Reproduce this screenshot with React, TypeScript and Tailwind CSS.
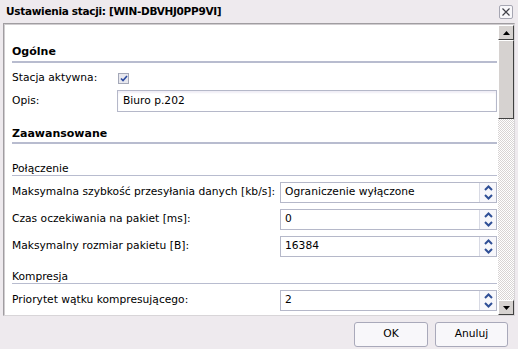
import React from "react";

const font = { fontFamily: '"DejaVu Sans", Verdana, sans-serif' };

function SpinInput({ value }: { value: string }) {
  return (
    <div className="flex h-[21px] w-[217px] border border-[#b5b8c9] bg-white">
      <div className="flex flex-1 items-center pl-[4px] text-[10.7px] text-black">{value}</div>
      <div className="flex w-[17px] flex-col border-l border-[#d8dae4] bg-[#f7f7fb]">
        <div className="flex flex-1 items-center justify-center">
          <svg width="9" height="6" viewBox="0 0 9 6">
            <path d="M1 5 L4.5 1.5 L8 5" fill="none" stroke="#2f4f96" strokeWidth="2" />
          </svg>
        </div>
        <div className="flex flex-1 items-center justify-center">
          <svg width="9" height="6" viewBox="0 0 9 6">
            <path d="M1 1 L4.5 4.5 L8 1" fill="none" stroke="#2f4f96" strokeWidth="2" />
          </svg>
        </div>
      </div>
    </div>
  );
}

function Row({ label, value, className = "" }: { label: string; value: string; className?: string }) {
  return (
    <div className={"flex h-[21px] items-center justify-between " + className}>
      <span className="text-[10.7px] text-black">{label}</span>
      <SpinInput value={value} />
    </div>
  );
}

function ScrollBtn({ up }: { up: boolean }) {
  return (
    <div className="flex h-[15px] w-[16px] items-center justify-center border border-t-white border-l-white border-r-[#404040] border-b-[#404040] bg-[#d6d2d0]">
      <svg width="7" height="4" viewBox="0 0 7 4">
        {up ? <path d="M0 4 L3.5 0 L7 4 Z" fill="#000" /> : <path d="M0 0 L3.5 4 L7 0 Z" fill="#000" />}
      </svg>
    </div>
  );
}

export default function App() {
  return (
    <div className="flex h-[349px] w-[518px] flex-col bg-[#eeeaee]" style={font}>
      {/* title bar */}
      <div className="flex h-[23px] items-center justify-between pl-[6px] pr-[5px]">
        <span className="text-[10.5px] font-bold tracking-[-0.3px] text-black">Ustawienia stacji: [WIN-DBVHJ0PP9VI]</span>
        <div className="flex h-[14px] w-[14px] items-center justify-center rounded-[2px] border border-[#a6a6b2] bg-[#f8f7fa]">
          <svg width="8" height="8" viewBox="0 0 8 8">
            <path d="M0.5 0.5 L7.5 7.5 M7.5 0.5 L0.5 7.5" stroke="#404048" strokeWidth="1.2" />
          </svg>
        </div>
      </div>
      {/* panel */}
      <div className="ml-[3px] flex h-[293px] w-[512px] border border-[#a09da1] border-r-[#d8d5d8] border-b-[#d8d5d8]">
        <div className="flex flex-1 border-t border-l border-[#d0cdd0] bg-white">
          <div className="flex flex-1 flex-col pl-[7px] pr-[1px] pt-[18px]">
            <div className="flex h-[20px] items-center border-b-2 border-[#b8bccf] text-[11px] font-bold text-black">Ogólne</div>
            <div className="mt-[5px] flex h-[20px] items-center">
              <span className="w-[106px] text-[10.7px] text-black">Stacja aktywna:</span>
              <div className="flex h-[11px] w-[11px] items-center justify-center border border-[#a4a8b8] bg-[#e8e8ee]">
                <svg width="8" height="7" viewBox="0 0 8 7">
                  <path d="M1 3.5 L3 5.5 L7 1" fill="none" stroke="#2b4aa0" strokeWidth="1.6" />
                </svg>
              </div>
            </div>
            <div className="mt-[2px] flex h-[22px] items-center">
              <span className="w-[105px] text-[10.7px] text-black">Opis:</span>
              <div className="flex h-[22px] flex-1 items-center border border-[#b5b8c9] bg-white pl-[5px] text-[10.7px] text-black shadow-[inset_0_2px_2px_#f0eef6]">Biuro p.202</div>
            </div>
            <div className="mt-[14px] flex h-[18px] items-center border-b-2 border-[#b8bccf] text-[11px] font-bold text-black">Zaawansowane</div>
            <div className="mt-[18px] flex h-[14px] items-end border-b border-[#b8bccf] text-[10.7px] leading-[13px] text-black">Połączenie</div>
            <Row className="mt-[6px]" label="Maksymalna szybkość przesyłania danych [kb/s]:" value="Ograniczenie wyłączone" />
            <Row className="mt-[6px]" label="Czas oczekiwania na pakiet [ms]:" value="0" />
            <Row className="mt-[6px]" label="Maksymalny rozmiar pakietu [B]:" value="16384" />
            <div className="mt-[13px] flex h-[14px] items-end border-b border-[#b8bccf] text-[10.7px] leading-[13px] text-black">Kompresja</div>
            <Row className="mt-[6px]" label="Priorytet wątku kompresującego:" value="2" />
          </div>
          {/* scrollbar */}
          <div className="flex w-[16px] flex-col">
            <ScrollBtn up={true} />
            <div className="h-[79px] w-[16px] border border-t-white border-l-white border-r-[#404040] border-b-[#404040] bg-[#d6d2d0]" />
            <div className="flex-1 bg-[repeating-conic-gradient(#d8d4d4_0_25%,#ffffff_0_50%)] bg-[length:2px_2px]" />
            <ScrollBtn up={false} />
          </div>
        </div>
      </div>
      {/* buttons */}
      <div className="mt-[6px] flex justify-end gap-[7px] pr-[10px]">
        <button className="flex h-[25px] w-[74px] items-center justify-center rounded-[3px] border border-[#a9a9ba] bg-[#f8f7fa] text-[10.7px] text-black">OK</button>
        <button className="flex h-[25px] w-[73px] items-center justify-center rounded-[3px] border border-[#a9a9ba] bg-[#f8f7fa] text-[10.7px] text-black">Anuluj</button>
      </div>
    </div>
  );
}
